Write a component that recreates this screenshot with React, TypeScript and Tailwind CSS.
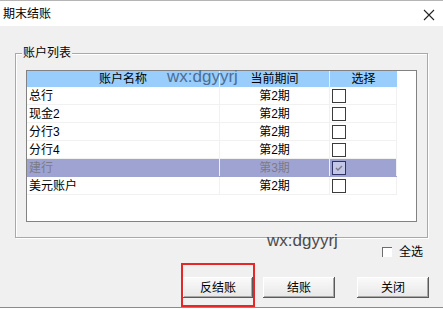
import React from 'react';

const rows = [
  { name: '总行', period: '第2期', checked: false },
  { name: '现金2', period: '第2期', checked: false },
  { name: '分行3', period: '第2期', checked: false },
  { name: '分行4', period: '第2期', checked: false },
  { name: '建行', period: '第3期', checked: true, active: true },
  { name: '美元账户', period: '第2期', checked: false },
];

const font = "font-['Liberation_Sans','Noto_Sans_CJK_SC',sans-serif]";

const Box = ({ checked, active }: { checked: boolean; active?: boolean }) => (
  <div
    className={`w-[14px] h-[14px] border flex items-center justify-center ${
      active ? 'border-[#2f3266] bg-[#c3c6e6]' : 'border-[#3c3c3c] bg-white'
    }`}
  >
    {checked && (
      <svg width="10" height="10" viewBox="0 0 10 10">
        <path d="M2 5 L4 7 L8 3" stroke="#7a7a8a" strokeWidth="1.4" fill="none" />
      </svg>
    )}
  </div>
);

const Btn = ({ label }: { label: string }) => (
  <button
    className="w-full h-[21px] bg-gradient-to-b from-[#fbfbfb] to-[#e6e6e6] text-[12px] text-black
      shadow-[inset_-1px_-1px_#5a5a5a,inset_1px_1px_#ffffff,inset_-2px_-2px_#a8a8a8]"
  >
    {label}
  </button>
);

export default function App() {
  return (
    <div
      className={`w-[443px] h-[308px] bg-[#f0f0f0] border-b border-[#8a8a8a] flex
        flex-col ${font} text-black`}
    >
      {/* Title bar */}
      <div className="h-[26px] bg-white border-t border-[#b5b5b5] flex items-center justify-between pl-[3px] pr-[8px]">
        <span className="text-[12px] leading-none">期末结账</span>
        <svg width="12" height="12" viewBox="0 0 12 12" className="mt-[2px]">
          <path d="M1 1 L11 11 M11 1 L1 11" stroke="#222" strokeWidth="1.1" />
        </svg>
      </div>

      {/* Group box */}
      <div
        className="relative ml-[15px] mt-[27px] w-[413px] h-[185px] border border-[#a9a9a9]
          shadow-[inset_1px_1px_#ffffff,1px_1px_#ffffff] pt-[16px] px-[10px]"
      >
        <span className="absolute left-[6px] top-[-8px] px-[1px] bg-[#f0f0f0] text-[12px] leading-[14px]">
          账户列表
        </span>

        <div className="relative h-[152px] bg-white border border-[#828282]">
          {/* Header */}
          <div className="flex h-[16px] text-[12px] leading-[16px]">
            <div className="w-[193px] bg-[#99cdfb] text-center border-r border-[#e6eef8]">
              账户名称
            </div>
            <div className="w-[110px] bg-[#99cdfb] text-center border-r border-[#e6eef8]">
              当前期间
            </div>
            <div className="w-[67px] bg-[#99cdfb] text-center">选择</div>
          </div>
          <span className="absolute left-[140px] top-[-5px] text-[17px] leading-[22px] text-[#4d6d95] font-['Liberation_Sans',sans-serif]">
            wx:dgyyrj
          </span>

          {/* Rows */}
          {rows.map((r) => (
            <div
              key={r.name}
              className={`flex h-[18px] text-[12px] leading-[19px] w-[370px] border-b ${
                r.active
                  ? 'bg-[#9fa3d2] text-[#7b7b86] border-[#9fa3d2]'
                  : 'border-[#f1f1f1]'
              }`}
            >
              <div className="w-[193px] pl-[2px] border-r border-[#f1f1f1]">{r.name}</div>
              <div className="w-[110px] text-center border-r border-[#f1f1f1]">{r.period}</div>
              <div className="w-[67px] pl-[2px] flex items-center border-r border-[#f1f1f1]">
                <Box checked={r.checked} active={r.active} />
              </div>
            </div>
          ))}
        </div>
      </div>

      {/* Select all */}
      <div className="relative flex justify-end items-center pr-[20px] mt-[8px] h-[12px]">
        <span className="absolute left-[267px] top-[-16px] text-[17px] leading-[22px] text-[#4c4c4c] font-['Liberation_Sans',sans-serif]">
          wx:dgyyrj
        </span>
        <div className="w-[10px] h-[10px] bg-white border-t border-l border-[#6d6d6d] mr-[7px]" />
        <span className="text-[12px] leading-none">全选</span>
      </div>

      {/* Buttons */}
      <div className="flex mt-[19px] pl-[183px]">
        <div className="relative">
          <div className="w-[70px] flex">
            <Btn label="反结账" />
          </div>
          <div className="absolute left-[-2px] top-[-14px] w-[74px] h-[44px] border-2 border-[#e52727]" />
        </div>
        <div className="ml-[10px] w-[72px] flex flex-col">
          <Btn label="结账" />
        </div>
        <div className="ml-[22px] w-[72px] flex flex-col">
          <Btn label="关闭" />
        </div>
      </div>
    </div>
  );
}
